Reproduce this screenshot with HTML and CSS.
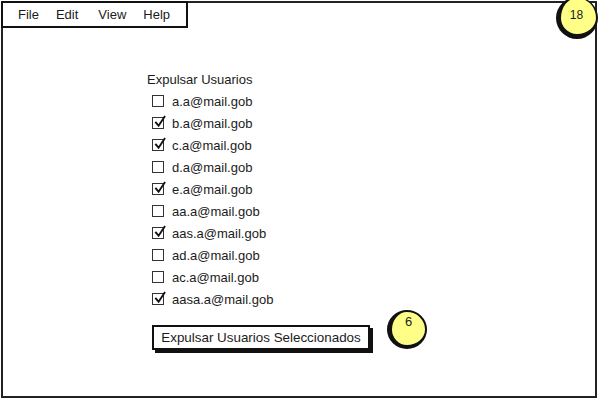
FILE: index.html
```html
<!DOCTYPE html>
<html>
<head>
<meta charset="utf-8">
<link rel="stylesheet" href="styles.css">
</head>
<body>
<div class="window">
  <nav class="menubar">
    <span class="menu-item">File</span>
    <span class="menu-item">Edit</span>
    <span class="menu-item menu-view">View</span>
    <span class="menu-item">Help</span>
  </nav>
  <div class="badge badge-top">18</div>
  <section class="panel">
    <div class="title">Expulsar Usuarios</div>
    <ul class="list">
      <li class="row"><span class="box"></span>a.a@mail.gob</li>
      <li class="row"><span class="box checked"><svg viewBox="0 0 14 14"><path d="M2.5 7.5 L6 11.5 L13 1"/></svg></span>b.a@mail.gob</li>
      <li class="row"><span class="box checked"><svg viewBox="0 0 14 14"><path d="M2.5 7.5 L6 11.5 L13 1"/></svg></span>c.a@mail.gob</li>
      <li class="row"><span class="box"></span>d.a@mail.gob</li>
      <li class="row"><span class="box checked"><svg viewBox="0 0 14 14"><path d="M2.5 7.5 L6 11.5 L13 1"/></svg></span>e.a@mail.gob</li>
      <li class="row"><span class="box"></span>aa.a@mail.gob</li>
      <li class="row"><span class="box checked"><svg viewBox="0 0 14 14"><path d="M2.5 7.5 L6 11.5 L13 1"/></svg></span>aas.a@mail.gob</li>
      <li class="row"><span class="box"></span>ad.a@mail.gob</li>
      <li class="row"><span class="box"></span>ac.a@mail.gob</li>
      <li class="row"><span class="box checked"><svg viewBox="0 0 14 14"><path d="M2.5 7.5 L6 11.5 L13 1"/></svg></span>aasa.a@mail.gob</li>
    </ul>
    <div class="actions">
      <button class="btn">Expulsar Usuarios Seleccionados</button>
      <div class="badge badge-btn">6</div>
    </div>
  </section>
</div>
</body>
</html>
```
FILE: styles.css
```css
html, body {
  margin: 0;
  padding: 0;
  background: #fff;
}
body {
  font-family: "Liberation Sans", Arial, sans-serif;
  color: #1b1b1b;
  width: 600px;
  height: 400px;
  overflow: hidden;
}
.window {
  position: relative;
  box-sizing: border-box;
  margin: 1px 3px 0 1px;
  width: 596px;
  height: 397px;
  border: 2px solid #222;
  background: #fff;
}
.menubar {
  position: absolute;
  left: -2px;
  top: -2px;
  box-sizing: border-box;
  width: 187px;
  height: 27px;
  border: 2px solid #111;
  background: #fff;
  display: flex;
  align-items: center;
  padding-left: 15px;
  gap: 17px;
  font-size: 13px;
}
.menu-item {
  line-height: 20px;
}
.menu-view {
  margin-left: 3px;
}
.badge {
  position: absolute;
  box-sizing: border-box;
  border-radius: 50%;
  background: #ffff88;
  border-style: solid;
  border-color: #111;
  font-size: 12px;
  text-align: center;
}
.badge-top {
  left: 553px;
  top: -6px;
  width: 42px;
  height: 42px;
  border-width: 1px 2px 5px 5px;
  padding-top: 10px;
  padding-right: 4px;
  line-height: 14px;
}
.panel {
  padding: 67px 0 0 144px;
}
.title {
  font-size: 13px;
  line-height: 20px;
  margin-bottom: 0;
}
.list {
  list-style: none;
  margin: 0;
  padding: 0 0 0 5px;
}
.row {
  display: flex;
  align-items: center;
  height: 22px;
  font-size: 13px;
  gap: 8px;
}
.box {
  position: relative;
  box-sizing: border-box;
  width: 12px;
  height: 12px;
  border: 1.5px solid #333;
  flex: none;
}
.box svg {
  position: absolute;
  left: 0;
  top: -3px;
  width: 13px;
  height: 13px;
  fill: none;
  stroke: #111;
  stroke-width: 2;
}
.actions {
  position: relative;
  margin: 15px 0 0 5px;
  height: 40px;
}
.btn {
  box-sizing: border-box;
  width: 218px;
  height: 25px;
  border: 2px solid #111;
  background: #fff;
  box-shadow: 3px 3px 0 #111;
  font-family: "Liberation Sans", Arial, sans-serif;
  font-size: 13.4px;
  color: #1b1b1b;
  padding: 0;
  text-align: center;
}
.badge-btn {
  left: 235px;
  top: -15px;
  width: 40px;
  height: 39px;
  border-width: 2px 2px 4px 5px;
  padding-top: 3px;
  line-height: 14px;
  font-size: 13px;
}
```
